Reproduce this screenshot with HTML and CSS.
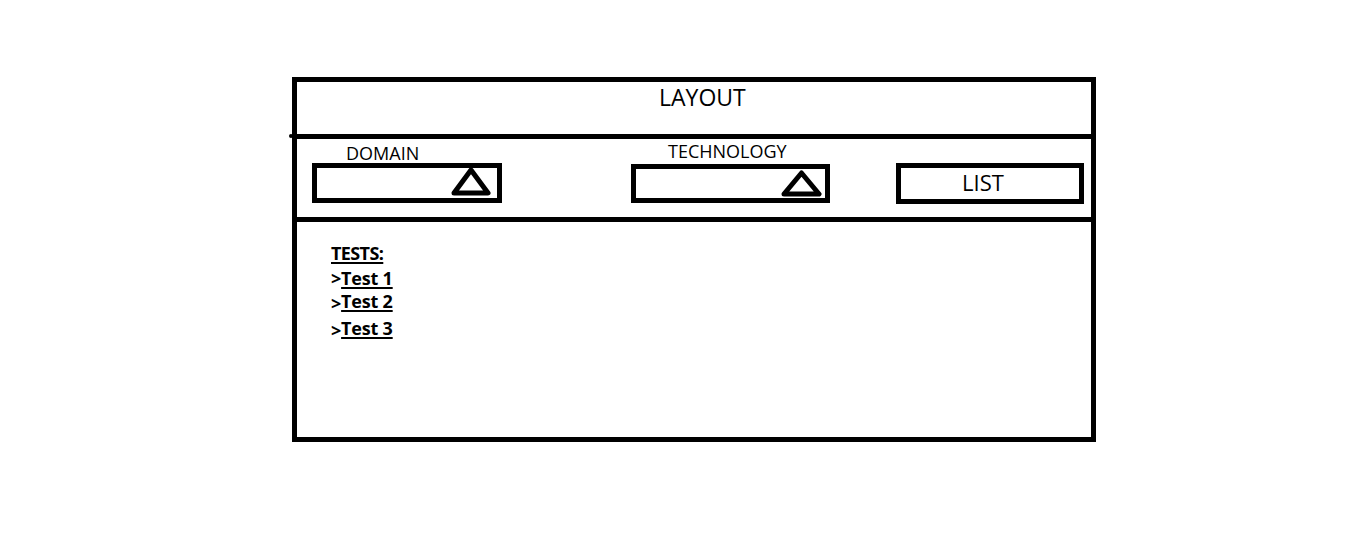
FILE: index.html
```html
<!DOCTYPE html>
<html>
<head>
<meta charset="utf-8">
<link rel="stylesheet" href="styles.css">
</head>
<body>
<div class="frame">
  <div class="header"><span class="title">LAYOUT</span></div>
  <div class="toolbar">
    <div class="field field-domain">
      <div class="label">DOMAIN</div>
      <div class="select">
        <svg class="tri" width="40" height="29" viewBox="0 0 40 29"><polygon points="20,3 37,26 3,26" fill="none" stroke="#000" stroke-width="5" stroke-linejoin="round"/></svg>
      </div>
    </div>
    <div class="field field-tech">
      <div class="label">TECHNOLOGY</div>
      <div class="select">
        <svg class="tri" width="41" height="27" viewBox="0 0 41 27"><polygon points="20.5,3 38,24 3,24" fill="none" stroke="#000" stroke-width="5" stroke-linejoin="round"/></svg>
      </div>
    </div>
    <div class="field field-list">
      <div class="button">LIST</div>
    </div>
  </div>
  <div class="content">
    <div class="tests-title">TESTS:</div>
    <div class="test-row r1"><span class="gt">&gt;</span><span class="link">Test 1</span></div>
    <div class="test-row r2"><span class="gt low">&gt;</span><span class="link">Test 2</span></div>
    <div class="test-row r3"><span class="gt low">&gt;</span><span class="link">Test 3</span></div>
  </div>
</div>
</body>
</html>
```
FILE: styles.css
```css
html, body {
  margin: 0;
  padding: 0;
  background: #fff;
}
body {
  font-family: "Open Sans", "DejaVu Sans", sans-serif;
  color: #000;
}
.frame {
  margin-left: 292px;
  margin-top: 77px;
  width: 804px;
  height: 365px;
  box-sizing: border-box;
  border: 5px solid #000;
  display: flex;
  flex-direction: column;
}
.header {
  height: 52px;
  border-bottom: 5px solid #000;
  position: relative;
}
.header::before {
  content: "";
  position: absolute;
  left: -8px;
  bottom: -4px;
  width: 4px;
  height: 4px;
  background: #000;
  border-radius: 2px;
}
.title {
  display: block;
  padding-left: 362px;
  font-size: 23px;
  line-height: 30px;
}
.toolbar {
  height: 78px;
  border-bottom: 5px solid #000;
  display: flex;
  padding-left: 15px;
}
.field {
  display: flex;
  flex-direction: column;
}
.field-domain {
  width: 190px;
}
.field-tech {
  width: 199px;
  margin-left: 129px;
}
.field-list {
  width: 188px;
  margin-left: 66px;
  padding-top: 24px;
}
.label {
  font-size: 18px;
  line-height: 20px;
  padding-top: 4px;
  padding-left: 34px;
}
.field-tech .label {
  padding-top: 2px;
  padding-left: 37px;
  margin-bottom: 3px;
}
.select {
  height: 40px;
  box-sizing: border-box;
  border: 5px solid #000;
  display: flex;
  justify-content: flex-end;
  align-items: center;
  padding-right: 6px;
}
.field-tech .select {
  height: 39px;
  padding-right: 3px;
}
.field-domain .tri {
  margin-top: -3px;
}
.button {
  height: 41px;
  box-sizing: border-box;
  border: 5px solid #000;
  display: flex;
  align-items: center;
  justify-content: center;
  padding-right: 14px;
  padding-bottom: 3px;
  font-size: 22px;
}
.content {
  flex: 1;
  padding-left: 34px;
  padding-top: 19px;
  font-weight: 700;
  font-size: 18px;
  line-height: 24px;
}
.tests-title {
  text-decoration: underline;
  text-decoration-thickness: 2px;
  text-underline-offset: 2px;
  letter-spacing: -0.6px;
}
.test-row {
  letter-spacing: -0.2px;
}
.test-row.r1 {
  margin-top: 1px;
}
.test-row.r2 {
  margin-top: -1px;
}
.test-row.r3 {
  margin-top: 1px;
}
.link {
  text-decoration: underline;
  text-decoration-thickness: 2px;
  text-underline-offset: 2px;
}
.gt.low {
  vertical-align: -2px;
}
```
